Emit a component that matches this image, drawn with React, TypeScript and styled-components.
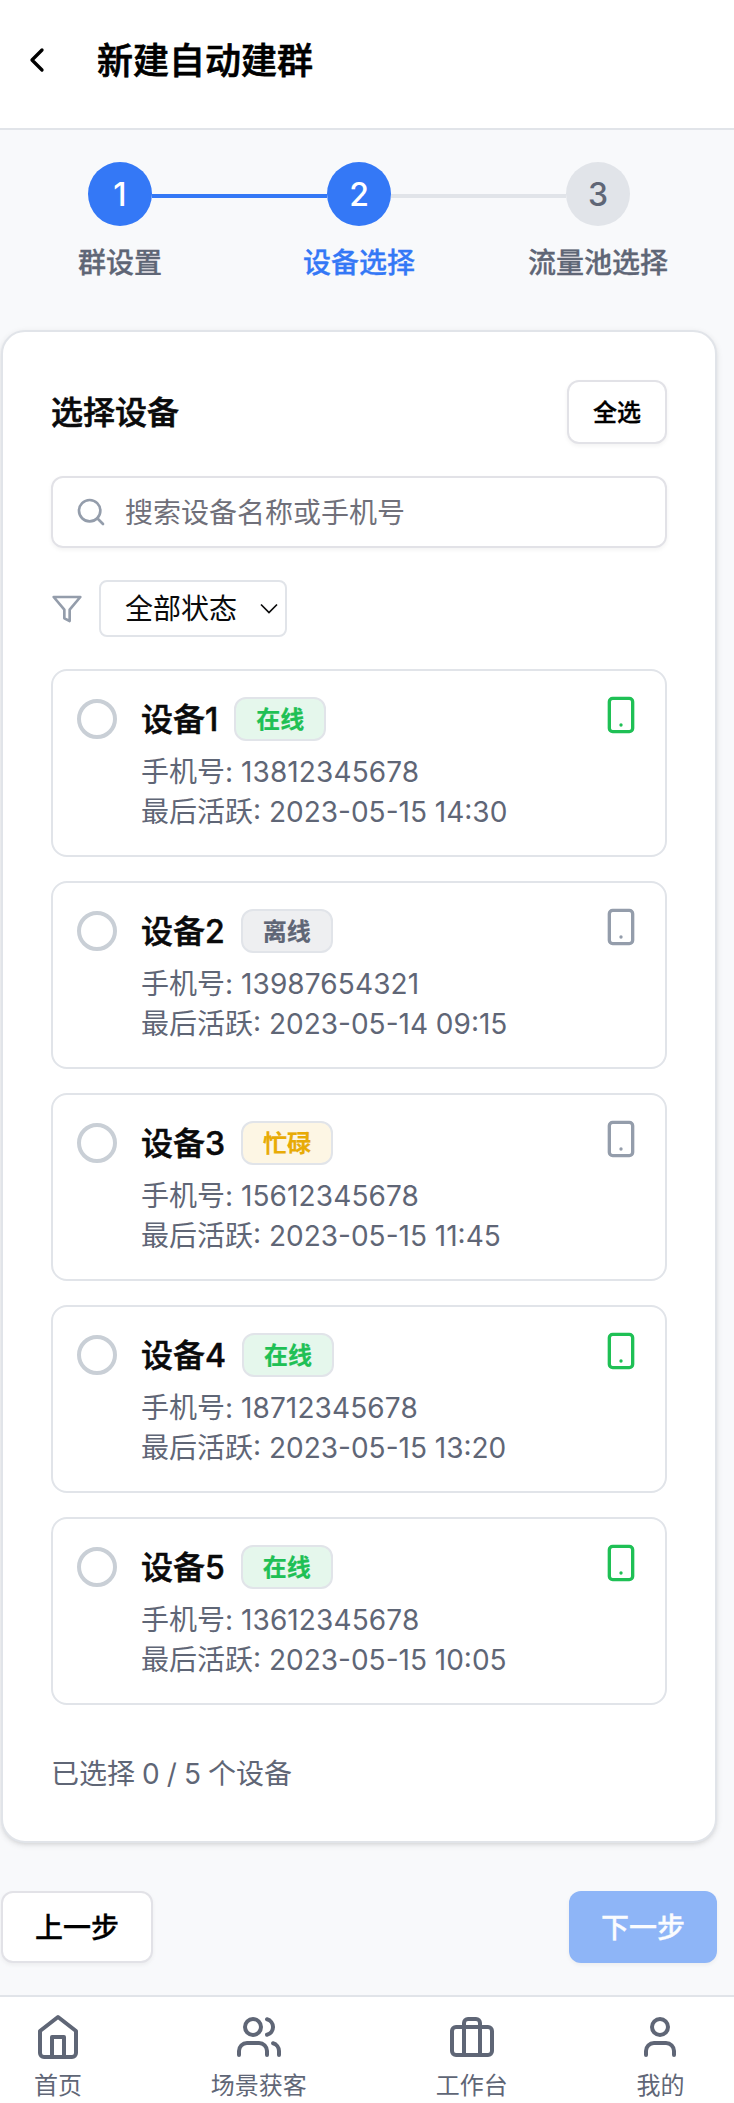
import React from "react";
import styled, { createGlobalStyle } from "styled-components";

const GlobalStyle = createGlobalStyle`
  *, *::before, *::after { box-sizing: border-box; }
  body {
    margin: 0;
    background: #f8f9fb;
    color: #0a0a0b;
    font-family: Inter, "Noto Sans CJK SC", sans-serif;
    font-size: 28px;
    line-height: 40px;
  }
  button, input, select { font: inherit; color: inherit; }
`;

const Page = styled.div`
  display: flex;
  flex-direction: column;
  height: 2103px;
  overflow: hidden;
`;

const Header = styled.header`
  display: flex;
  align-items: center;
  height: 130px;
  padding: 0 17px 9px;
  background: #fff;
  border-bottom: 2px solid #e1e4e9;
`;

const BackButton = styled.button`
  display: flex;
  width: 40px;
  height: 40px;
  padding: 0;
  margin-right: 40px;
  border: 0;
  background: none;
`;

const Title = styled.h1`
  margin: 0;
  padding-top: 2px;
  font-size: 36px;
  line-height: 56px;
  font-weight: 500;
  color: #000;
  -webkit-text-stroke: 0.7px currentColor;
`;

const Main = styled.main`
  flex: 1;
  padding: 32px 17px 0 1px;
`;

const Steps = styled.ol`
  display: grid;
  grid-template-columns: repeat(3, 239px);
  margin: 0 0 48px -0.5px;
  padding: 0;
  list-style: none;
`;

const Step = styled.li<{ $active?: boolean }>`
  display: flex;
  flex-direction: column;
  align-items: center;
  gap: 17px;
  height: 120px;
  font-weight: 500;
  color: ${(p) => (p.$active ? "#3478f6" : "#5f6676")};
`;

const StepLabel = styled.span`
  -webkit-text-stroke: 0.3px currentColor;
`;

const StepTrack = styled.div`
  display: flex;
  align-items: center;
  width: 100%;
`;

const StepCircle = styled.span<{ $done?: boolean }>`
  display: flex;
  align-items: center;
  justify-content: center;
  flex: none;
  width: 64px;
  height: 64px;
  padding-top: 2px;
  border-radius: 50%;
  font-size: 32px;
  background: ${(p) => (p.$done ? "#3478f6" : "#e1e4e9")};
  color: ${(p) => (p.$done ? "#fff" : "#5f6676")};
`;

const StepLine = styled.span<{ $tone: "done" | "todo" | "none" }>`
  flex: 1;
  height: 4px;
  margin-top: 4px;
  background: ${(p) =>
    ({ done: "#3478f6", todo: "#e1e4e9", none: "transparent" })[p.$tone]};
`;

const Card = styled.section`
  display: flex;
  flex-direction: column;
  height: 1513px;
  padding: 48px;
  background: #fff;
  border: 2px solid #e1e4e9;
  border-radius: 24px;
  box-shadow: 0 2px 6px rgba(0, 0, 0, 0.1), 0 2px 4px -2px rgba(0, 0, 0, 0.1);
  & > * { flex-shrink: 0; }
`;

const CardHead = styled.div`
  display: flex;
  align-items: center;
  justify-content: space-between;
  margin-bottom: 32px;
`;

const CardTitle = styled.h2`
  margin: 0;
  padding-top: 2px;
  font-size: 32px;
  line-height: 48px;
  font-weight: 500;
  -webkit-text-stroke: 0.6px currentColor;
`;

const Button = styled.button<{ $size?: "small"; $primary?: boolean }>`
  display: flex;
  align-items: center;
  justify-content: center;
  height: ${(p) => (p.$size ? 64 : 72)}px;
  padding: 2px ${(p) => (p.$size ? 24 : 32)}px 0;
  border: ${(p) => (p.$primary ? "0" : "2px solid #e2e2e7")};
  border-radius: 12px;
  background: ${(p) => (p.$primary ? "#8eb5f7" : "#fff")};
  color: ${(p) => (p.$primary ? "#fbfcfe" : "#000")};
  font-size: ${(p) => (p.$size ? 24 : 28)}px;
  font-weight: 500;
  -webkit-text-stroke: 0.3px currentColor;
  box-shadow: 0 2px 4px rgba(0, 0, 0, 0.05);
`;

const SearchBox = styled.label`
  display: flex;
  align-items: center;
  gap: 18px;
  height: 72px;
  padding: 0 22px;
  margin-bottom: 32px;
  border: 2px solid #e2e2e7;
  border-radius: 12px;
  box-shadow: 0 2px 4px rgba(0, 0, 0, 0.05);
`;

const SearchInput = styled.input`
  flex: 1;
  min-width: 0;
  padding: 2px 0 0;
  border: 0;
  outline: 0;
  background: none;
  &::placeholder { color: #70707a; opacity: 1; }
`;

const FilterRow = styled.div`
  display: flex;
  align-items: center;
  gap: 16px;
  margin-bottom: 32px;
`;

const StatusSelect = styled.button`
  display: flex;
  align-items: center;
  justify-content: space-between;
  width: 188px;
  height: 57px;
  padding: 0 7px 0 24px;
  border: 2px solid #e1e4e9;
  border-radius: 8px;
  background: #fff;
`;

const DeviceList = styled.ul`
  display: flex;
  flex-direction: column;
  gap: 24px;
  margin: 0 0 48px;
  padding: 0;
  list-style: none;
`;

const DeviceRow = styled.li`
  display: flex;
  align-items: flex-start;
  gap: 24px;
  height: 188px;
  padding: 24px;
  border: 2px solid #e1e4e9;
  border-radius: 16px;
`;

const Radio = styled.span`
  flex: none;
  width: 40px;
  height: 40px;
  margin-top: 4px;
  border: 4px solid #c9cfd6;
  border-radius: 50%;
`;

const DeviceInfo = styled.div`
  flex: 1;
  color: #5f6676;
`;

const DeviceHead = styled.div`
  display: flex;
  align-items: center;
  gap: 16px;
  height: 48px;
  margin-bottom: 9px;
`;

const DeviceName = styled.h3`
  margin: 0;
  padding-top: 2px;
  font-size: 32px;
  line-height: 48px;
  font-weight: 500;
  color: #0a0a0b;
  -webkit-text-stroke: 0.5px currentColor;
`;

type Status = "online" | "offline" | "busy";
const tones: Record<Status, { label: string; fg: string; bg: string }> = {
  online: { label: "在线", fg: "#1fc055", bg: "#e5f7ec" },
  offline: { label: "离线", fg: "#5f6676", bg: "#eeeff1" },
  busy: { label: "忙碌", fg: "#e8ab06", bg: "#fdf6e4" },
};

const Badge = styled.span<{ $status: Status }>`
  padding: 5px 20px 3px;
  border: 2px solid #e1e4e9;
  border-radius: 12px;
  font-size: 24px;
  line-height: 32px;
  font-weight: 700;
  color: ${(p) => tones[p.$status].fg};
  background: ${(p) => tones[p.$status].bg};
  -webkit-text-stroke: 0.2px currentColor;
`;

const Detail = styled.div``;

const Phone = styled.span`
  letter-spacing: 0.12px;
`;

const Summary = styled.div`
  padding-top: 1px;
  word-spacing: -0.8px;
  color: #5f6676;
`;

const Actions = styled.div`
  display: flex;
  justify-content: space-between;
  margin-top: 48px;
`;

const TabBar = styled.nav`
  display: flex;
  justify-content: space-between;
  height: 108px;
  padding: 16px 49.5px 0 34px;
  border-top: 2px solid #e1e4e9;
  background: #fff;
`;

const Tab = styled.a`
  display: flex;
  flex-direction: column;
  align-items: center;
  gap: 9px;
  font-size: 24px;
  line-height: 32px;
  color: #5f6676;
`;

const Icon = ({
  size,
  color = "currentColor",
  children,
}: {
  size: number;
  color?: string;
  children: React.ReactNode;
}) => (
  <IconSvg
    width={size}
    height={size}
    viewBox="0 0 24 24"
    fill="none"
    stroke={color}
    strokeWidth={2}
    strokeLinecap="round"
    strokeLinejoin="round"
  >
    {children}
  </IconSvg>
);

const IconSvg = styled.svg`
  display: block;
  flex: none;
`;

const devices: { name: string; status: Status; phone: string; active: string; live: boolean }[] = [
  { name: "设备1", status: "online", phone: "13812345678", active: "2023-05-15 14:30", live: true },
  { name: "设备2", status: "offline", phone: "13987654321", active: "2023-05-14 09:15", live: false },
  { name: "设备3", status: "busy", phone: "15612345678", active: "2023-05-15 11:45", live: false },
  { name: "设备4", status: "online", phone: "18712345678", active: "2023-05-15 13:20", live: true },
  { name: "设备5", status: "online", phone: "13612345678", active: "2023-05-15 10:05", live: true },
];

export default function App() {
  return (
    <Page>
      <GlobalStyle />
      <Header>
        <BackButton aria-label="返回">
          <Icon size={40} color="#000">
            <path d="m15 18-6-6 6-6" />
          </Icon>
        </BackButton>
        <Title>新建自动建群</Title>
      </Header>
      <Main>
        <Steps>
          <Step>
            <StepTrack>
              <StepLine $tone="none" />
              <StepCircle $done>1</StepCircle>
              <StepLine $tone="done" />
            </StepTrack>
            <StepLabel>群设置</StepLabel>
          </Step>
          <Step $active>
            <StepTrack>
              <StepLine $tone="done" />
              <StepCircle $done>2</StepCircle>
              <StepLine $tone="todo" />
            </StepTrack>
            <StepLabel>设备选择</StepLabel>
          </Step>
          <Step>
            <StepTrack>
              <StepLine $tone="todo" />
              <StepCircle>3</StepCircle>
              <StepLine $tone="none" />
            </StepTrack>
            <StepLabel>流量池选择</StepLabel>
          </Step>
        </Steps>
        <Card>
          <CardHead>
            <CardTitle>选择设备</CardTitle>
            <Button $size="small">全选</Button>
          </CardHead>
          <SearchBox>
            <Icon size={32} color="#949dab">
              <circle cx="11" cy="11" r="8" />
              <path d="m21 21-4.3-4.3" />
            </Icon>
            <SearchInput placeholder="搜索设备名称或手机号" />
          </SearchBox>
          <FilterRow>
            <Icon size={32} color="#949dab">
              <polygon points="22 3 2 3 10 12.46 10 19 14 21 14 12.46 22 3" />
            </Icon>
            <StatusSelect>
              全部状态
              <svg width="18" height="12" viewBox="0 0 18 12" fill="none" stroke="#0a0a0b" strokeWidth="1.7">
                <path d="M1 1.5l8 8 8-8" />
              </svg>
            </StatusSelect>
          </FilterRow>
          <DeviceList>
            {devices.map((d) => (
              <DeviceRow key={d.name}>
                <Radio />
                <DeviceInfo>
                  <DeviceHead>
                    <DeviceName>{d.name}</DeviceName>
                    <Badge $status={d.status}>{tones[d.status].label}</Badge>
                  </DeviceHead>
                  <Detail>
                    手机号: <Phone>{d.phone}</Phone>
                  </Detail>
                  <Detail>最后活跃: {d.active}</Detail>
                </DeviceInfo>
                <Icon size={40} color={d.live ? "#1fc055" : "#949dab"}>
                  <rect x="5" y="2" width="14" height="20" rx="2" />
                  <path d="M12 18h.01" />
                </Icon>
              </DeviceRow>
            ))}
          </DeviceList>
          <Summary>已选择 0 / 5 个设备</Summary>
        </Card>
        <Actions>
          <Button>上一步</Button>
          <Button $primary>下一步</Button>
        </Actions>
      </Main>
      <TabBar>
        <Tab>
          <Icon size={48}>
            <path d="m3 9 9-7 9 7v11a2 2 0 0 1-2 2H5a2 2 0 0 1-2-2z" />
            <polyline points="9 22 9 12 15 12 15 22" />
          </Icon>
          首页
        </Tab>
        <Tab>
          <Icon size={48}>
            <path d="M16 21v-2a4 4 0 0 0-4-4H6a4 4 0 0 0-4 4v2" />
            <circle cx="9" cy="7" r="4" />
            <path d="M22 21v-2a4 4 0 0 0-3-3.87" />
            <path d="M16 3.13a4 4 0 0 1 0 7.75" />
          </Icon>
          场景获客
        </Tab>
        <Tab>
          <Icon size={48}>
            <rect x="2" y="7" width="20" height="14" rx="2" />
            <path d="M16 21V5a2 2 0 0 0-2-2h-4a2 2 0 0 0-2 2v16" />
          </Icon>
          工作台
        </Tab>
        <Tab>
          <Icon size={48}>
            <path d="M19 21v-2a4 4 0 0 0-4-4H9a4 4 0 0 0-4 4v2" />
            <circle cx="12" cy="7" r="4" />
          </Icon>
          我的
        </Tab>
      </TabBar>
    </Page>
  );
}
